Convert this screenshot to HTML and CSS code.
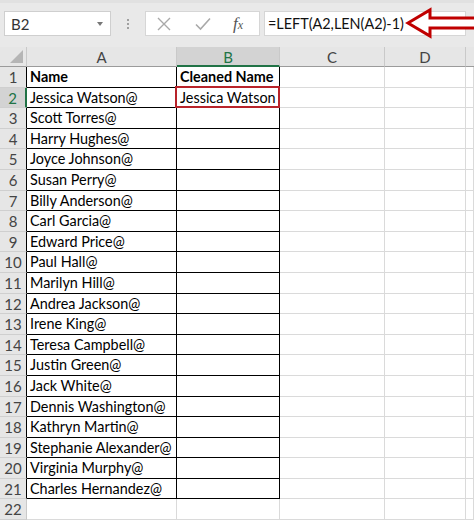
FILE: index.html
```html
<!DOCTYPE html>
<html lang="en">
<head>
  <meta charset="UTF-8">
  <title>LEFT / LEN – remove last character</title>
  <link rel="stylesheet" href="styles.css">
</head>
<body>
  <div class="toolbar">
    <div class="namebox">
      <span>B2</span>
      <span class="caret"></span>
    </div>
    <div class="grip"><i></i><i></i><i></i></div>
    <div class="fbtns">
      <svg class="ico-x" width="14" height="14" viewBox="0 0 14 14"><path d="M1 1 L13 13 M13 1 L1 13" stroke="#a9a9a9" stroke-width="1.4" fill="none"/></svg>
      <svg class="ico-ok" width="16" height="14" viewBox="0 0 16 14"><path d="M1 7.5 L5.5 12 L15 1.5" stroke="#a9a9a9" stroke-width="1.6" fill="none"/></svg>
      <span class="fx">f<small>x</small></span>
    </div>
    <div class="formula">=LEFT(A2,LEN(A2)-1)</div>
  </div>

  <!-- annotation arrow pointing to the formula -->
  <svg class="arrow" width="72" height="34" viewBox="0 0 72 34">
    <path d="M3 16 L25 3 L25 11 L72 11 L72 21 L25 21 L25 29 Z" fill="#fff" stroke="#c00000" stroke-width="3" stroke-linejoin="miter"/>
  </svg>

  <div class="sheet" id="sheet">
    <div class="corner"></div>
    <div class="colhead">A</div>
    <div class="colhead active">B</div>
    <div class="colhead">C</div>
    <div class="colhead">D</div>
    <div class="colhead last"></div>
  </div>

  <script>
    const nomes = [
      "Jessica Watson@", "Scott Torres@", "Harry Hughes@", "Joyce Johnson@",
      "Susan Perry@", "Billy Anderson@", "Carl Garcia@", "Edward Price@",
      "Paul Hall@", "Marilyn Hill@", "Andrea Jackson@", "Irene King@",
      "Teresa Campbell@", "Justin Green@", "Jack White@", "Dennis Washington@",
      "Kathryn Martin@", "Stephanie Alexander@", "Virginia Murphy@", "Charles Hernandez@"
    ];

    const sheet = document.getElementById('sheet');
    let html = '';
    for (let r = 1; r <= 22; r++) {
      const inTable = r <= 21;
      let a = '', b = '';
      if (r === 1) { a = 'Name'; b = 'Cleaned Name'; }
      else if (r <= 21) { a = nomes[r - 2]; }
      if (r === 2) b = 'Jessica Watson';

      html += `<div class="rowhead${inTable ? ' edge' : ''}${r === 2 ? ' active' : ''}">${r}</div>`;
      html += `<div class="cell${inTable ? ' t' : ''}${r === 1 ? ' bold' : ''}">${a}</div>`;
      html += `<div class="cell${inTable ? ' t' : ''}${r === 1 ? ' bold' : ''}${r === 2 ? ' sel' : ''}">${b}</div>`;
      html += '<div class="cell"></div><div class="cell"></div><div class="cell"></div>';
    }
    sheet.insertAdjacentHTML('beforeend', html);
  </script>
</body>
</html>
```

FILE: styles.css
```css
body {
  margin: 0;
  width: 474px;
  height: 520px;
  overflow: hidden;
  position: relative;
  background: #fff;
  font-family: Lato, 'Open Sans', sans-serif;
  color: #000;
}

/* barra de fórmulas */
.toolbar {
  height: 47px;
  box-sizing: border-box;
  background: #e9e9e9;
  border-top: 3px solid #e1e1e1;
  padding-top: 8px;
  display: flex;
  align-items: flex-start;
}
.namebox {
  margin-left: 4px;
  width: 107px;
  height: 25px;
  box-sizing: border-box;
  background: #fff;
  border: 1px solid #cfcfcf;
  display: flex;
  align-items: center;
  justify-content: space-between;
  padding: 0 7px 0 6px;
  font-size: 15px;
  color: #333;
}
.caret {
  width: 0;
  height: 0;
  border-left: 3px solid transparent;
  border-right: 3px solid transparent;
  border-top: 4px solid #777;
}
.grip {
  width: 34px;
  height: 25px;
  display: flex;
  flex-direction: column;
  align-items: center;
  justify-content: center;
  gap: 2px;
}
.grip i {
  width: 2px;
  height: 2px;
  background: #a0a0a0;
}
.fbtns {
  width: 115px;
  height: 25px;
  box-sizing: border-box;
  background: #fff;
  border: 1px solid #d6d6d6;
  display: flex;
  align-items: center;
  padding-left: 11px;
}
.ico-x { margin-right: 24px; }
.ico-ok { margin-right: 22px; }
.fx {
  font-family: 'Liberation Serif', serif;
  font-style: italic;
  font-size: 17px;
  color: #555;
}
.fx small { font-size: 12px; }
.formula {
  margin-left: 4px;
  width: 202px;
  height: 25px;
  box-sizing: border-box;
  background: #fff;
  border: 1px solid #d6d6d6;
  padding-left: 3px;
  font-size: 14.4px;
  line-height: 23px;
  color: #111;
  white-space: nowrap;
}

.arrow {
  position: absolute;
  left: 405px;
  top: 7px;
}

/* planilha */
.sheet {
  display: grid;
  grid-template-columns: 27px 150px 103px 105px 81px 1fr;
  grid-template-rows: 20px;
  grid-auto-rows: 20.6px;
  font-size: 14.4px;
}
.corner {
  background: #e6e6e6;
  border-right: 1px solid #c9c9c9;
  border-bottom: 1px solid #9b9b9b;
  position: relative;
}
.corner::after {
  content: '';
  position: absolute;
  right: 3px;
  bottom: 3px;
  border-left: 13px solid transparent;
  border-bottom: 13px solid #b5b5b5;
}
.colhead {
  background: #e6e6e6;
  border-right: 1px solid #c9c9c9;
  border-bottom: 1px solid #9b9b9b;
  text-align: center;
  line-height: 20px;
  font-size: 15px;
  color: #444;
}
.colhead.active {
  background: #d3d3d3;
  color: #217346;
  border-bottom: 2px solid #217346;
}
.colhead.last { border-right: none; }

.rowhead {
  background: #e6e6e6;
  border-right: 1px solid #c9c9c9;
  border-bottom: 1px solid #cfcfcf;
  text-align: center;
  line-height: 20px;
  font-size: 15px;
  color: #444;
}
.rowhead.edge { border-right-color: #000; }
.rowhead.active {
  background: #d3d3d3;
  color: #217346;
  border-right: 2px solid #217346;
}

.cell {
  border-right: 1px solid #dadada;
  border-bottom: 1px solid #dadada;
  padding-left: 3px;
  line-height: 20px;
  white-space: nowrap;
  position: relative;
}
.cell.t {
  border-right-color: #000;
  border-bottom-color: #000;
}
.cell.bold { font-weight: bold; }
.cell.sel::after {
  content: '';
  position: absolute;
  top: -2px;
  left: -2px;
  right: -1px;
  bottom: -1px;
  border: 2px solid #b8232a;
}
```
